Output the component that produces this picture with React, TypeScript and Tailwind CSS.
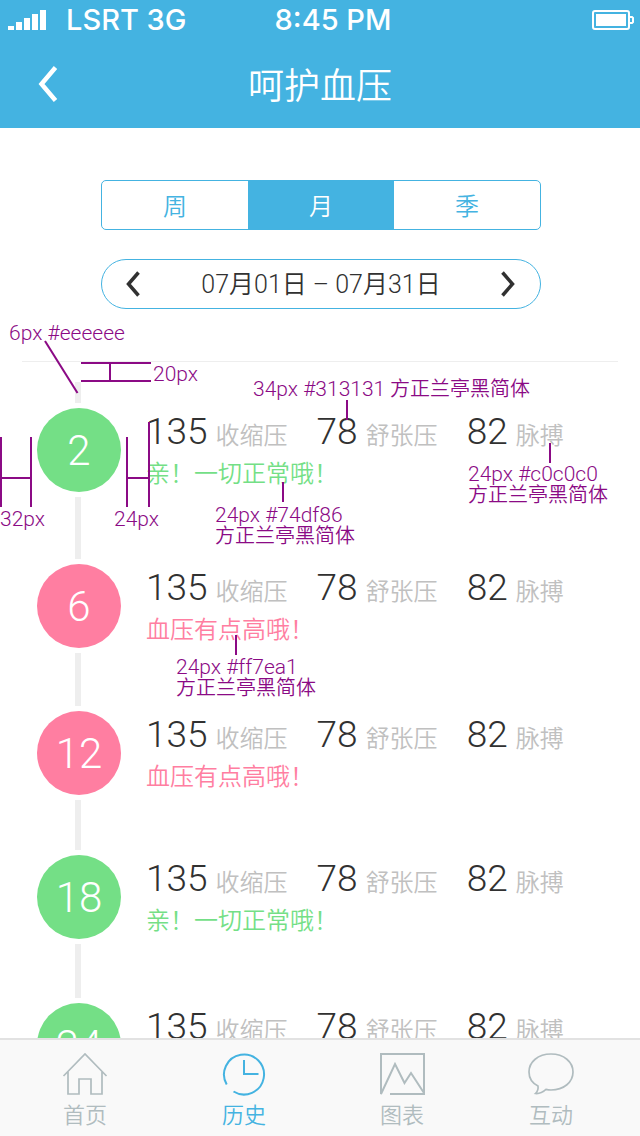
import type { ReactNode } from "react";

const SANS = "font-['Roboto','Noto_Sans_CJK_SC',sans-serif]";

type Tone = "good" | "high";

interface Reading {
  day: number;
  tone: Tone;
  rowClass: string;
}

const READINGS: Reading[] = [
  { day: 2, tone: "good", rowClass: "h-[156px]" },
  { day: 6, tone: "high", rowClass: "h-[147px]" },
  { day: 12, tone: "high", rowClass: "h-[144px]" },
  { day: 18, tone: "good", rowClass: "h-[148px]" },
  { day: 24, tone: "good", rowClass: "h-[148px]" },
];

const TONES: Record<Tone, { badge: string; text: string; message: string }> = {
  good: { badge: "bg-[#74df86]", text: "text-[#74df86]", message: "亲！一切正常哦！" },
  high: { badge: "bg-[#ff7ea1]", text: "text-[#ff7ea1]", message: "血压有点高哦！" },
};

const METRICS = [
  { value: 135, label: "收缩压" },
  { value: 78, label: "舒张压" },
  { value: 82, label: "脉搏" },
];

function SignalIcon() {
  return (
    <svg className="h-5 w-[38px]" viewBox="0 0 38 20" fill="#fff" aria-hidden="true">
      <rect x="0" y="16" width="6" height="4" />
      <rect x="8" y="12" width="6" height="8" />
      <rect x="16" y="8" width="6" height="12" />
      <rect x="24" y="4" width="6" height="16" />
      <rect x="32" y="0" width="6" height="20" />
    </svg>
  );
}

function BatteryIcon() {
  return (
    <svg className="h-5 w-[42px]" viewBox="0 0 42 20" fill="none" aria-hidden="true">
      <rect x="1" y="1" width="36" height="18" rx="2" stroke="#fff" strokeWidth="2" />
      <rect x="4" y="4" width="30" height="12" fill="#fff" />
      <path d="M38 7h2l1 1v4l-1 1h-2" stroke="#fff" strokeWidth="2" />
    </svg>
  );
}

function Header() {
  return (
    <header className="shrink-0 bg-[#44b3e1] text-white">
      <div className="grid h-10 grid-cols-[1fr_auto_1fr] items-center pr-1.5 pl-2 font-['Inter',sans-serif] text-[29px] leading-10 font-medium">
        <div className="flex items-center gap-5">
          <SignalIcon />
          <span>LSRT 3G</span>
        </div>
        <span className="pl-6">8:45 PM</span>
        <div className="flex justify-end">
          <BatteryIcon />
        </div>
      </div>
      <div className="grid h-[88px] grid-cols-[96px_1fr_96px] items-center">
        <button type="button" aria-label="返回" className="flex h-full items-center pl-[38px]">
          <svg className="h-9 w-5" viewBox="0 0 20 36" fill="none" aria-hidden="true">
            <path d="M17.500 1.500 3.500 18l14 16.500" stroke="#fff" strokeWidth="4.500" />
          </svg>
        </button>
        <h1 className="pt-1.5 text-center text-[36px] leading-[44px]">呵护血压</h1>
      </div>
    </header>
  );
}

function PeriodTabs() {
  const base = "flex-1 pt-1 text-center text-[24px] leading-[44px]";
  return (
    <div className="flex h-[50px] overflow-hidden rounded-[5px] border border-[#44b3e1]">
      <button type="button" className={`${base} text-[#44b3e1]`}>周</button>
      <button type="button" aria-pressed="true" className={`${base} bg-[#44b3e1] text-white`}>月</button>
      <button type="button" className={`${base} text-[#44b3e1]`}>季</button>
    </div>
  );
}

function DateRange() {
  return (
    <div className="flex h-[50px] items-center justify-between rounded-full border border-[#44b3e1] px-6 text-[#313131]">
      <button type="button" aria-label="上一月">
        <svg className="h-[26px] w-4" viewBox="0 0 16 26" fill="none" aria-hidden="true">
          <path d="M12.500 1.500 2.500 13l10 11.500" stroke="currentColor" strokeWidth="3.500" />
        </svg>
      </button>
      <span className="pt-0.5 text-[25px] leading-[46px]">07月01日 – 07月31日</span>
      <button type="button" aria-label="下一月">
        <svg className="h-[26px] w-4" viewBox="0 0 16 26" fill="none" aria-hidden="true">
          <path d="M2.500 1.500 12.500 13l-10 11.500" stroke="currentColor" strokeWidth="3.500" />
        </svg>
      </button>
    </div>
  );
}

function ReadingRow({ reading }: { reading: Reading }) {
  const tone = TONES[reading.tone];
  return (
    <li className={`flex shrink-0 gap-[25px] ${reading.rowClass}`}>
      <div className="flex w-[84px] flex-col items-center gap-[5px] pb-[5px]">
        <div className={`flex size-[84px] shrink-0 items-center justify-center rounded-full pt-0.5 text-[42px] leading-none text-white ${tone.badge}`}>
          {reading.day}
        </div>
        <div className="mr-[2px] w-1.5 flex-1 bg-[#eeeeee]" />
      </div>
      <div className="pt-[5px]">
        <dl className="flex gap-[29px]">
          {METRICS.map((metric) => (
            <div key={metric.label} className="flex flex-row-reverse items-baseline gap-2 whitespace-nowrap">
              <dt className="text-[24px] leading-[38px] text-[#c0c0c0]">{metric.label}</dt>
              <dd className="text-[37px] leading-[38px] text-[#313131]">{metric.value}</dd>
            </div>
          ))}
        </dl>
        <p className={`text-[24px] leading-[38px] ${tone.text}`}>{tone.message}</p>
      </div>
    </li>
  );
}

function Timeline() {
  return (
    <section className="min-h-0 flex-1 overflow-hidden">
      <div className="mx-[22px] border-t border-[#eeeeee]" />
      <div className="mt-5 ml-[75px] h-[21px] w-1.5 bg-[#eeeeee]" />
      <ul className="mt-[5px] flex flex-col pl-[37px]">
        {READINGS.map((reading) => (
          <ReadingRow key={reading.day} reading={reading} />
        ))}
      </ul>
    </section>
  );
}

function NavItem({ label, active, children }: { label: string; active?: boolean; children: ReactNode }) {
  return (
    <a
      href="#"
      aria-current={active ? "page" : undefined}
      className={`flex flex-col items-center gap-[5px] pt-3 text-[22px] leading-[30px] ${active ? "text-[#44b3e1]" : "text-[#b0bcbf]"}`}
    >
      <svg className="h-11 w-12" viewBox="0 0 48 44" fill="none" stroke="currentColor" strokeWidth="2" aria-hidden="true">
        {children}
      </svg>
      {label}
    </a>
  );
}

function BottomNav() {
  return (
    <nav className="grid h-[98px] shrink-0 grid-cols-[170fr_148fr_168fr_130fr] border-t-2 border-[#e2e2e2] bg-[#f9f9f9] pr-6">
      <NavItem label="首页">
        <path strokeWidth="1.700" d="M2.500 24 24 2l21.500 22M7 20v22h11V27h12v15h11V20" />
      </NavItem>
      <NavItem label="历史" active>
        <path d="M6.700 32.500A20 20 0 1 1 13.500 39.500M24 8v14h14.500" />
      </NavItem>
      <NavItem label="图表">
        <path d="M12 42h34V2H3v40L17 12l9.500 19L33 21l13 20" />
      </NavItem>
      <NavItem label="互动">
        <path strokeWidth="1.700" d="M11 34C5 31 2 26 2 20 2 10 11 2 24 2s22 8 22 18-9 18-22 18c-2 0-3.500-.2-5-.6C16 40 12 42 8.500 41.500 10.500 39.500 11.500 37 11 34Z" />
      </NavItem>
    </nav>
  );
}

function Note({ place, children, font }: { place: string; children: string; font?: "inline" | "below" }) {
  return (
    <p className={`absolute whitespace-nowrap text-[21px] leading-[21px] ${place}`}>
      {children}
      {font === "inline" && <span className="text-[20px]"> 方正兰亭黑简体</span>}
      {font === "below" && <span className="block text-[20px] leading-[21px]">方正兰亭黑简体</span>}
    </p>
  );
}

function SpecNotes() {
  return (
    <div className="pointer-events-none absolute inset-0 overflow-hidden text-[#8b0a85]">
      <svg className="absolute top-0 left-0 h-[700px] w-[640px]" viewBox="0 0 640 700" fill="none" stroke="currentColor" strokeWidth="2" aria-hidden="true">
        <path d="M45 341 77.500 393" />
        <path d="M81 363h70M81 381h70M110 363v18" />
        <path d="M1 437v70M31 437v70M1 478h30" />
        <path d="M127 437v70M149 422v85M127 478h22" />
        <path d="M347 400v20M550 443v20M283 482v20M236 635v20" />
      </svg>
      <Note place="top-[323px] left-[9px]">6px #eeeeee</Note>
      <Note place="top-[364px] left-[153px]">20px</Note>
      <Note place="top-[509px] left-0">32px</Note>
      <Note place="top-[509px] left-[114px]">24px</Note>
      <Note place="top-[379px] left-[253px]" font="inline">34px #313131</Note>
      <Note place="top-[464px] left-[468px]" font="below">24px #c0c0c0</Note>
      <Note place="top-[505px] left-[215px]" font="below">24px #74df86</Note>
      <Note place="top-[657px] left-[176px]" font="below">24px #ff7ea1</Note>
    </div>
  );
}

export default function App() {
  return (
    <div className={`relative flex h-screen flex-col overflow-hidden bg-white font-[350] ${SANS}`}>
      <Header />
      <main className="flex min-h-0 flex-1 flex-col">
        <div className="mt-[52px] mb-[52px] flex flex-col gap-[29px] pr-[99px] pl-[101px]">
          <PeriodTabs />
          <DateRange />
        </div>
        <Timeline />
      </main>
      <BottomNav />
      <SpecNotes />
    </div>
  );
}
